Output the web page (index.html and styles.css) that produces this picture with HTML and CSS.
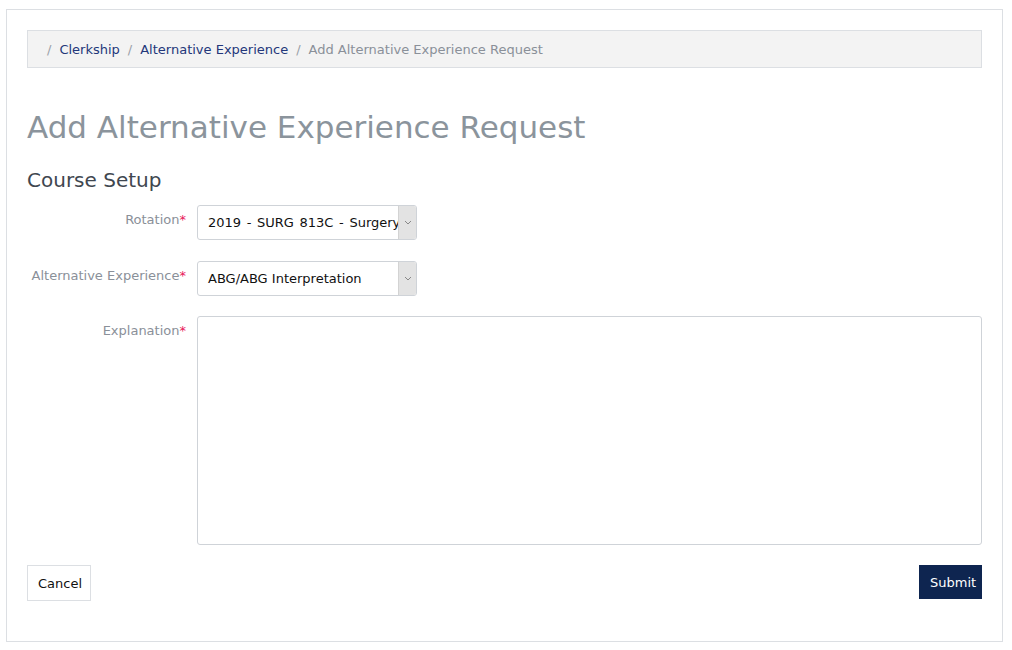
FILE: index.html
```html
<!DOCTYPE html>
<html>
<head>
<meta charset="utf-8">
<link rel="stylesheet" href="styles.css">
</head>
<body>
<div class="panel">
  <nav class="crumbs">
    <span class="sep">/</span><a class="link">Clerkship</a>
    <span class="sep">/</span><a class="link">Alternative Experience</a>
    <span class="sep">/</span><span class="active">Add Alternative Experience Request</span>
  </nav>
  <h1 class="title">Add Alternative Experience Request</h1>
  <h2 class="subtitle">Course Setup</h2>
  <div class="row first">
    <label class="lbl">Rotation<span class="req">*</span></label>
    <div class="select"><span class="val wide">2019 - SURG 813C - Surgery</span><span class="arrow"><svg width="8" height="5" viewBox="0 0 8 5"><path d="M1 1l3 3 3-3" fill="none" stroke="#888" stroke-width="1"/></svg></span></div>
  </div>
  <div class="row">
    <label class="lbl">Alternative Experience<span class="req">*</span></label>
    <div class="select"><span class="val">ABG/ABG Interpretation</span><span class="arrow"><svg width="8" height="5" viewBox="0 0 8 5"><path d="M1 1l3 3 3-3" fill="none" stroke="#888" stroke-width="1"/></svg></span></div>
  </div>
  <div class="row third">
    <label class="lbl">Explanation<span class="req">*</span></label>
    <div class="area"></div>
  </div>
  <div class="actions">
    <button class="btn cancel">Cancel</button>
    <button class="btn submit">Submit</button>
  </div>
</div>
</body>
</html>
```
FILE: styles.css
```css
* { box-sizing: border-box; }
body {
  margin: 9px 9px 0 6px;
  font-family: "DejaVu Sans", Verdana, sans-serif;
  font-size: 13px;
  background: #fff;
}
.panel {
  border: 1px solid #dcdfe3;
  height: 633px;
  padding: 20px 20px 0 20px;
}
.crumbs {
  background: #f3f3f3;
  border: 1px solid #dcdfe3;
  height: 38px;
  padding: 0 0 0 19px;
  display: flex;
  align-items: center;
  color: #8a9099;
}
.sep { color: #9aa0a8; margin-right: 8px; }
.crumbs .sep + .link, .crumbs .sep + .active { margin-right: 8px; }
.link { color: #23377a; text-decoration: none; }
.active { color: #8a9099; }
.title {
  margin: 41px 0 0 0;
  font-size: 31px;
  font-weight: normal;
  color: #8b949c;
  line-height: 36px;
}
.subtitle {
  margin: 23px 0 0 0;
  font-size: 20px;
  font-weight: normal;
  color: #3f4750;
  line-height: 24px;
}
.row {
  display: flex;
  align-items: flex-start;
  margin-top: 21px;
}
.row.first { margin-top: 13px; }
.row.third { margin-top: 20px; }
.lbl {
  width: 170px;
  padding-right: 11px;
  text-align: right;
  color: #8a9099;
  padding-top: 7px;
  line-height: 16px;
}
.req { color: #e8185a; }
.select {
  width: 220px;
  height: 35px;
  border: 1px solid #cfd3d8;
  border-radius: 3px;
  display: flex;
  overflow: hidden;
  color: #111;
}
.val {
  flex: 1;
  padding: 0 0 0 10px;
  line-height: 33px;
  white-space: nowrap;
  overflow: hidden;
}
.val.wide { word-spacing: 1.5px; }
.arrow {
  width: 18px;
  flex: none;
  background: #e3e3e3;
  border-left: 1px solid #d3d3d3;
  display: flex;
  align-items: center;
  justify-content: center;
}
.area {
  flex: 1;
  height: 229px;
  border: 1px solid #cfd3d8;
  border-radius: 3px;
}
.actions {
  display: flex;
  justify-content: space-between;
  margin-top: 20px;
}
.btn {
  font-family: "DejaVu Sans", Verdana, sans-serif;
  font-size: 13px;
  height: 35px;
  padding: 0 10px;
}
.cancel {
  background: #fff;
  border: 1px solid #dcdfe3;
  color: #111;
  width: 64px;
  height: 36px;
}
.submit {
  background: #0e2550;
  border: 1px solid #0e2550;
  color: #fff;
  width: 63px;
  height: 34px;
}
```
